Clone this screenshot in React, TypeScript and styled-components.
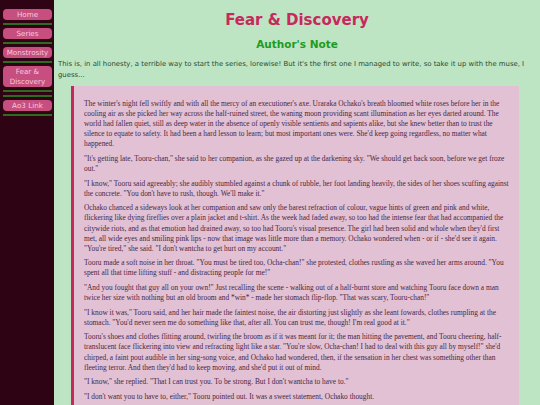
import React from "react";
import styled, { createGlobalStyle } from "styled-components";

const GlobalStyle = createGlobalStyle`
  html, body {
    margin: 0;
    padding: 0;
    background: #bde5c4;
  }
`;

const Page = styled.div`
  display: flex;
  min-height: 100vh;
  font-family: "DejaVu Sans", Verdana, sans-serif;
`;

const Sidebar = styled.nav`
  width: 49px;
  flex-shrink: 0;
  background: #2e0414;
  padding: 9px 2px 0 3px;
  display: flex;
  flex-direction: column;
  gap: 3px;
`;

const NavButton = styled.a`
  display: block;
  background: #c64f7f;
  color: #f5cadc;
  border-radius: 4px;
  text-align: center;
  font-size: 7.2px;
  line-height: 9.5px;
  padding: 1px 0 0.5px;
  text-decoration: none;
`;

const Divider = styled.div`
  height: 2px;
  background: #2f6a1f;
`;

const Main = styled.main`
  flex: 1;
  padding: 0 4px;
  min-width: 0;
`;

const Title = styled.h1`
  margin: 11px 0 0;
  text-align: center;
  font-size: 15px;
  line-height: 18px;
  font-weight: bold;
  color: #c8285b;
`;

const Subtitle = styled.h2`
  margin: 8px 0 0;
  text-align: center;
  font-size: 10.5px;
  line-height: 14px;
  font-weight: bold;
  color: #1f9a22;
`;

const Intro = styled.p`
  margin: 8px 0 0;
  font-size: 6.9px;
  line-height: 11px;
  color: #2c4a30;
`;

const Story = styled.blockquote`
  margin: 5px 17px 0 13px;
  background: #e2c1d5;
  border-left: 3px solid #c4285d;
  padding: 13px 10px 20px 10px;
`;

const Para = styled.p`
  margin: 0 0 4.5px;
  font-family: "Liberation Serif", "Times New Roman", serif;
  font-size: 7.4px;
  line-height: 10.1px;
  color: #48283f;
`;

const navItems: { label: string; double?: boolean }[] = [
  { label: "Home" },
  { label: "Series" },
  { label: "Monstrosity" },
  { label: "Fear & Discovery", double: true },
  { label: "Ao3 Link" },
];

const paragraphs = [
  "The winter's night fell swiftly and with all the mercy of an executioner's axe. Uraraka Ochako's breath bloomed white roses before her in the cooling air as she picked her way across the half-ruined street, the waning moon providing scant illumination as her eyes darted around. The world had fallen quiet, still as deep water in the absence of openly visible sentients and sapients alike, but she knew better than to trust the silence to equate to safety. It had been a hard lesson to learn; but most important ones were. She'd keep going regardless, no matter what happened.",
  "\"It's getting late, Tooru-chan,\" she said to her companion, as she gazed up at the darkening sky. \"We should get back soon, before we get froze out.\"",
  "\"I know,\" Tooru said agreeably; she audibly stumbled against a chunk of rubble, her foot landing heavily, the sides of her shoes scuffing against the concrete. \"You don't have to rush, though. We'll make it.\"",
  "Ochako chanced a sideways look at her companion and saw only the barest refraction of colour, vague hints of green and pink and white, flickering like dying fireflies over a plain jacket and t-shirt. As the week had faded away, so too had the intense fear that had accompanied the citywide riots, and as that emotion had drained away, so too had Tooru's visual presence. The girl had been solid and whole when they'd first met, all wide eyes and smiling pink lips - now that image was little more than a memory. Ochako wondered when - or if - she'd see it again. \"You're tired,\" she said. \"I don't wantcha to get hurt on my account.\"",
  "Tooru made a soft noise in her throat. \"You must be tired too, Ocha-chan!\" she protested, clothes rustling as she waved her arms around. \"You spent all that time lifting stuff - and distracting people for me!\"",
  "\"And you fought that guy all on your own!\" Just recalling the scene - walking out of a half-burnt store and watching Tooru face down a man twice her size with nothing but an old broom and *win* - made her stomach flip-flop. \"That was scary, Tooru-chan!\"",
  "\"I know it was,\" Tooru said, and her hair made the faintest noise, the air distorting just slightly as she leant fowards, clothes rumpling at the stomach. \"You'd never seen me do something like that, after all. You can trust me, though! I'm real good at it.\"",
  "Tooru's shoes and clothes flitting around, twirling the broom as if it was meant for it; the man hitting the pavement, and Tooru cheering, half-translucent face flickering into view and refracting light like a star. \"You're slow, Ocha-chan! I had to deal with this guy all by myself!\" she'd chirped, a faint pout audible in her sing-song voice, and Ochako had wondered, then, if the sensation in her chest was something other than fleeting terror. And then they'd had to keep moving, and she'd put it out of mind.",
  "\"I know,\" she replied. \"That I can trust you. To be strong. But I don't wantcha to have to.\"",
  "\"I don't want you to have to, either,\" Tooru pointed out. It was a sweet statement, Ochako thought.",
];

export default function App() {
  return (
    <>
      <GlobalStyle />
      <Page>
        <Sidebar>
          {navItems.map((item) => (
            <React.Fragment key={item.label}>
              <NavButton href="#">
                {item.label === "Fear & Discovery" ? (
                  <>
                    Fear &amp;
                    <br />
                    Discovery
                  </>
                ) : (
                  item.label
                )}
              </NavButton>
              <Divider />
              {item.double && <Divider />}
            </React.Fragment>
          ))}
        </Sidebar>
        <Main>
          <Title>Fear &amp; Discovery</Title>
          <Subtitle>Author's Note</Subtitle>
          <Intro>
            This is, in all honesty, a terrible way to start the series, lorewise! But it's the first
            one I managed to write, so take it up with the muse, I guess...
          </Intro>
          <Story>
            {paragraphs.map((text, i) => (
              <Para key={i}>{text}</Para>
            ))}
          </Story>
        </Main>
      </Page>
    </>
  );
}
